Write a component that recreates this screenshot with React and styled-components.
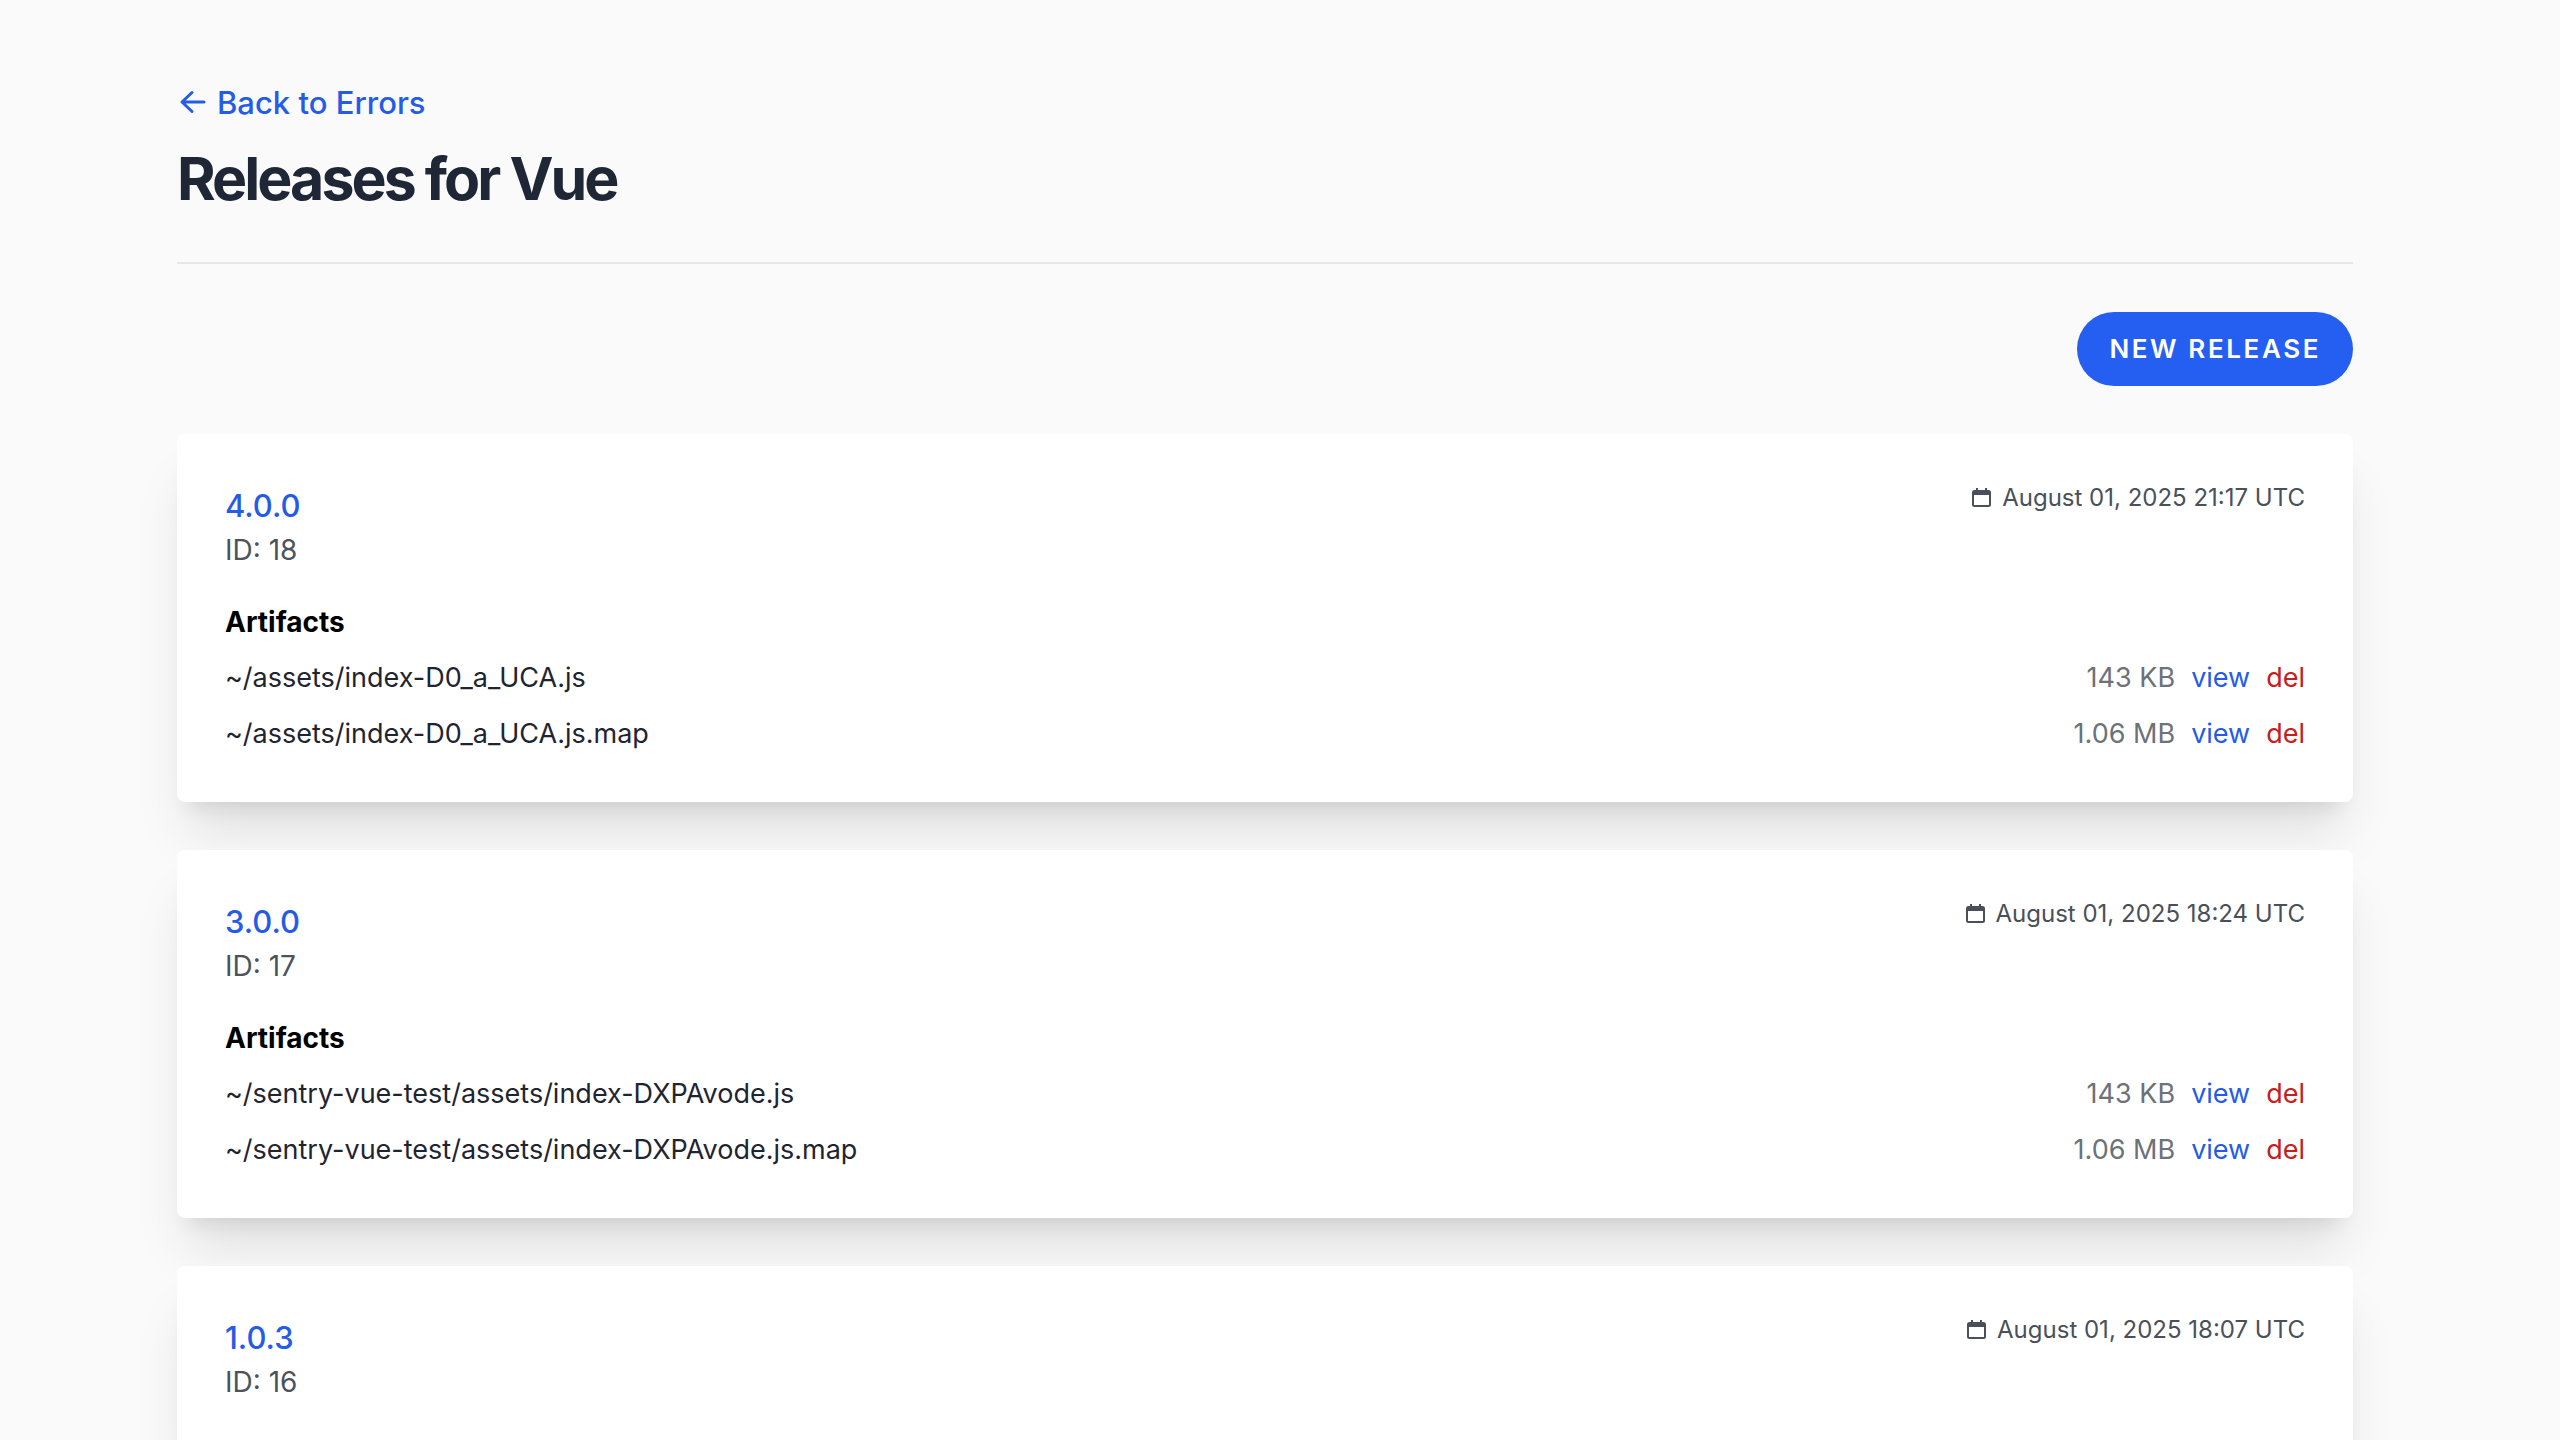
import React from "react";
import styled, { createGlobalStyle } from "styled-components";

const GlobalStyle = createGlobalStyle`
  *, *::before, *::after { box-sizing: border-box; }
  html { background: #fafafa; }
  body {
    margin: 0;
    height: 100vh;
    overflow: hidden;
    background: #fafafa;
    color: #1f2530;
    font-family: Inter, "Liberation Sans", sans-serif;
    font-size: 28px;
    line-height: 40px;
    -webkit-font-smoothing: antialiased;
  }
  h1, h2, h3, p, ul { margin: 0; padding: 0; }
  ul { list-style: none; }
`;

const Page = styled.main`
  padding: 79px 62px 48px 32px;
`;

const Container = styled.div`
  max-width: 2176px;
  margin: 0 auto;
  display: flex;
  flex-direction: column;
  gap: 48px;
`;

const Header = styled.header`
  display: flex;
  flex-direction: column;
  align-items: flex-start;
  gap: 16px;
  padding-bottom: 47px;
  border-bottom: 2px solid #e7e7e8;
`;

const BackLink = styled.a`
  display: inline-flex;
  align-items: center;
  gap: 8px;
  color: #245ce8;
  font-size: 31px;
  font-weight: 500;
  line-height: 48px;
  text-decoration: none;
`;

const Title = styled.h1`
  color: #1f2635;
  font-size: 59px;
  font-weight: 700;
  line-height: 72px;
  letter-spacing: -0.05em;
`;

const Actions = styled.div`
  display: flex;
  justify-content: flex-end;
`;

const PrimaryButton = styled.button`
  padding: 17px 32px;
  border: 0;
  border-radius: 37px;
  background: #245ff2;
  color: #fff;
  font: inherit;
  font-size: 26px;
  font-weight: 600;
  letter-spacing: 0.1em;
  text-transform: uppercase;
  cursor: pointer;
`;

const Card = styled.article`
  display: flex;
  flex-direction: column;
  gap: 32px;
  padding: 48px;
  border-radius: 8px;
  background: #fff;
  box-shadow: 0 40px 50px -10px rgba(0, 0, 0, 0.1), 0 16px 20px -12px rgba(0, 0, 0, 0.1);
`;

const CardTop = styled.div`
  display: flex;
  justify-content: space-between;
  align-items: flex-start;
`;

const Version = styled.h2`
  font-size: 31px;
  font-weight: 500;
  line-height: 48px;
`;

const TextLink = styled.a`
  color: ${(p) => (p.$danger ? "#c42020" : "#245ce8")};
  text-decoration: none;
`;

const ReleaseId = styled.p`
  color: #4d535c;
`;

const DateLabel = styled.time`
  display: flex;
  align-items: center;
  gap: 8px;
  color: #4a5059;
  font-size: 24px;
  line-height: 32px;
`;

const ArtifactsTitle = styled.h3`
  color: #000;
  font-size: 28px;
  font-weight: 700;
`;

const ArtifactList = styled.ul`
  display: flex;
  flex-direction: column;
  gap: 16px;
  padding-top: 16px;
`;

const ArtifactRow = styled.li`
  display: flex;
  justify-content: space-between;
  font-size: 27px;
`;

const ArtifactMeta = styled.div`
  display: flex;
  gap: 16px;
`;

const Size = styled.span`
  color: #6d7178;
`;

const ArrowIcon = () => (
  <svg width="32" height="32" viewBox="0 0 32 32" fill="none" stroke="currentColor" strokeWidth="3" strokeLinecap="round" strokeLinejoin="round" aria-hidden="true">
    <path d="M27 15H5M15 5.5L5 15l10 9.5" />
  </svg>
);

const CalendarIcon = () => (
  <svg width="24" height="24" viewBox="0 0 24 24" fill="none" stroke="currentColor" strokeWidth="2" aria-hidden="true">
    <rect x="3" y="5" width="17" height="15" rx="1.5" />
    <path d="M3 7h17" strokeWidth="4" />
    <path d="M7 2V6M16 2V6" />
  </svg>
);

const releases = [
  {
    version: "4.0.0",
    id: 18,
    date: "August 01, 2025 21:17 UTC",
    iso: "2025-08-01T21:17Z",
    artifacts: [
      { name: "~/assets/index-D0_a_UCA.js", size: "143 KB" },
      { name: "~/assets/index-D0_a_UCA.js.map", size: "1.06 MB" },
    ],
  },
  {
    version: "3.0.0",
    id: 17,
    date: "August 01, 2025 18:24 UTC",
    iso: "2025-08-01T18:24Z",
    artifacts: [
      { name: "~/sentry-vue-test/assets/index-DXPAvode.js", size: "143 KB" },
      { name: "~/sentry-vue-test/assets/index-DXPAvode.js.map", size: "1.06 MB" },
    ],
  },
  {
    version: "1.0.3",
    id: 16,
    date: "August 01, 2025 18:07 UTC",
    iso: "2025-08-01T18:07Z",
    artifacts: [],
  },
];

function ReleaseCard({ release }) {
  return (
    <Card>
      <CardTop>
        <div>
          <Version>
            <TextLink href="#">{release.version}</TextLink>
          </Version>
          <ReleaseId>ID: {release.id}</ReleaseId>
        </div>
        <DateLabel dateTime={release.iso}>
          <CalendarIcon />
          {release.date}
        </DateLabel>
      </CardTop>
      {release.artifacts.length > 0 && (
        <section>
          <ArtifactsTitle>Artifacts</ArtifactsTitle>
          <ArtifactList>
            {release.artifacts.map((artifact) => (
              <ArtifactRow key={artifact.name}>
                <span>{artifact.name}</span>
                <ArtifactMeta>
                  <Size>{artifact.size}</Size>
                  <TextLink href="#">view</TextLink>
                  <TextLink href="#" $danger>del</TextLink>
                </ArtifactMeta>
              </ArtifactRow>
            ))}
          </ArtifactList>
        </section>
      )}
    </Card>
  );
}

export default function App() {
  return (
    <>
      <GlobalStyle />
      <Page>
        <Container>
          <Header>
            <BackLink href="#">
              <ArrowIcon />
              Back to Errors
            </BackLink>
            <Title>Releases for Vue</Title>
          </Header>
          <Actions>
            <PrimaryButton type="button">New Release</PrimaryButton>
          </Actions>
          {releases.map((release) => (
            <ReleaseCard key={release.id} release={release} />
          ))}
        </Container>
      </Page>
    </>
  );
}
